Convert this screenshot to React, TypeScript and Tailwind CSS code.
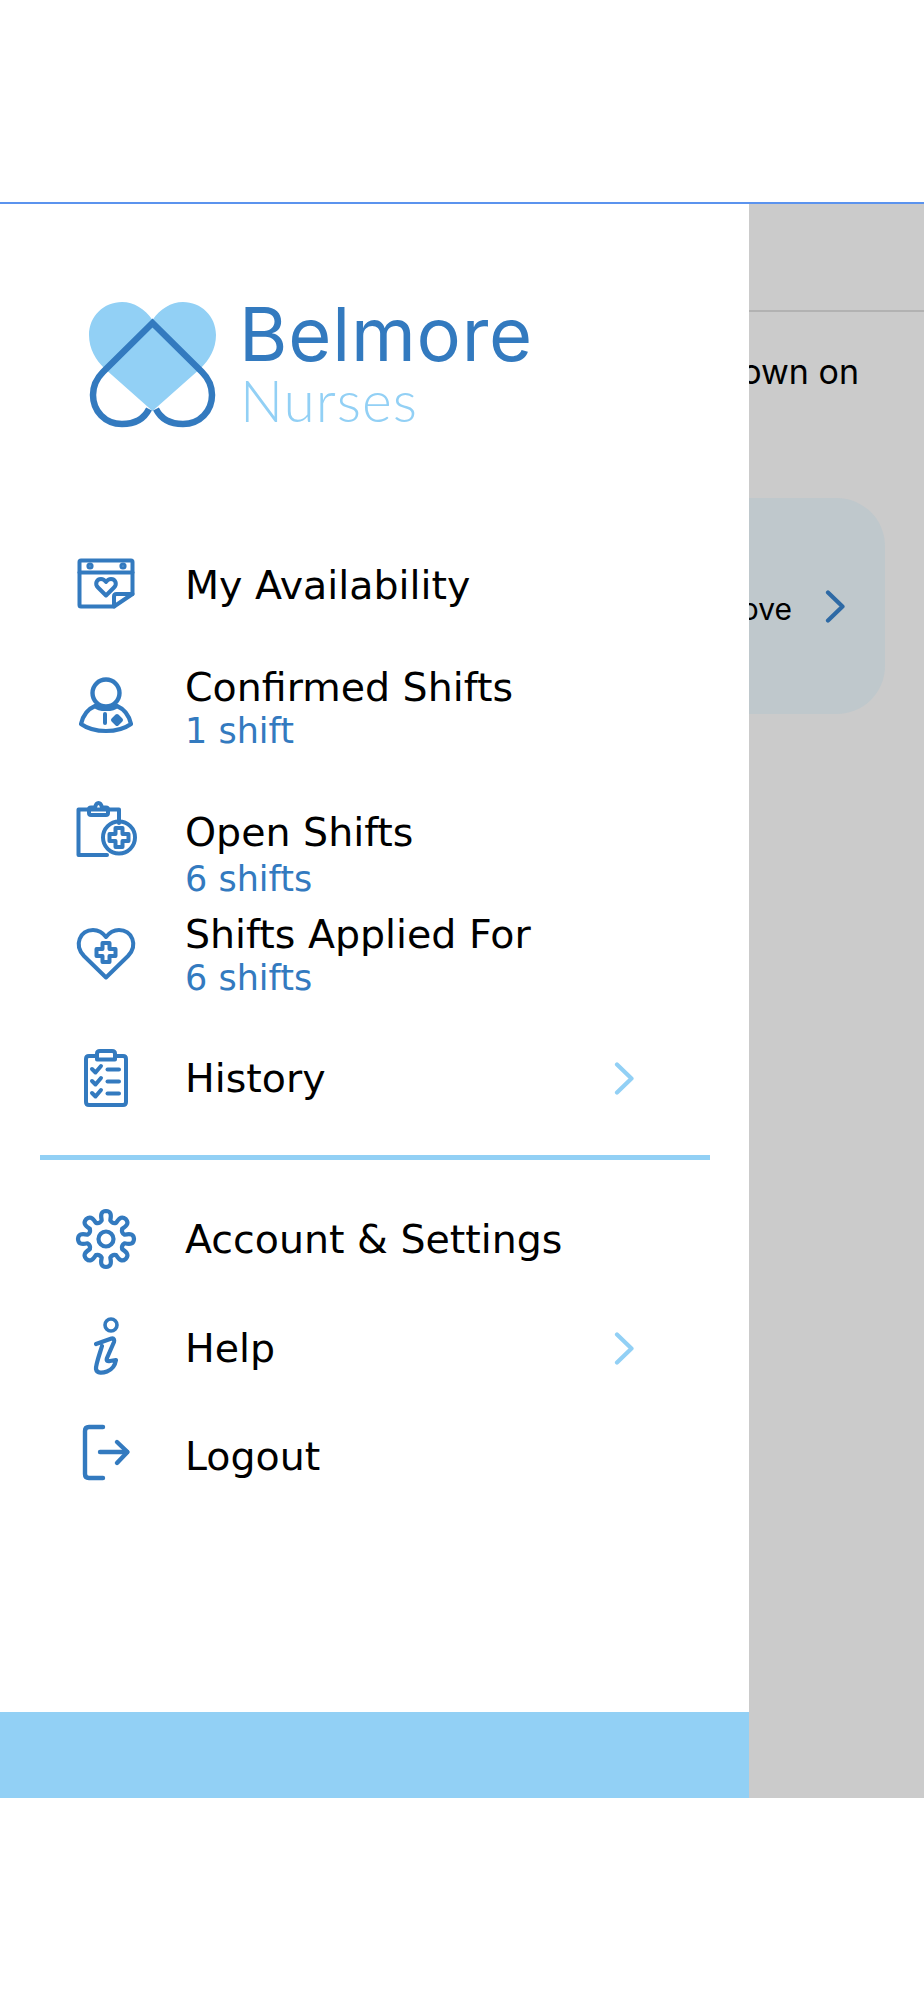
const BLUE = "#337abf";

function Logo() {
  return (
    <svg viewBox="85 298 135 135" className="w-[135px] h-[135px] shrink-0">
      <path
        d="M152.5 320 C145 309 134 302 122 302 C104 302 89 316 89 335 C89 349 96 360 104 368 L152.5 411 L201 368 C209 360 216 349 216 335 C216 316 201 302 183 302 C171 302 160 309 152.5 320 Z"
        fill="#92d0f5"
      />
      <path
        d="M149 409 C144 419 134 424 122 424 C105 424 93 411 93 395 C93 386 97 378 103 372 L152.5 323 L202 372 C208 378 212 386 212 395 C212 411 200 424 183 424 C171 424 161 419 156 409"
        fill="none"
        stroke={BLUE}
        strokeWidth="6.5"
      />
    </svg>
  );
}

function IconSvg({ children }: { children: React.ReactNode }) {
  return (
    <svg
      viewBox="0 0 72 64"
      className="w-[72px] h-[64px] shrink-0"
      fill="none"
      stroke={BLUE}
      strokeWidth="4"
      strokeLinecap="round"
      strokeLinejoin="round"
    >
      {children}
    </svg>
  );
}

// all icons are drawn around the centre of a 72x64 box
function CalendarIcon() {
  return (
    <IconSvg>
      <path d="M44 55.5 H11 Q9.5 55.5 9.5 54 V11 Q9.5 9.5 11 9.5 H61 Q62.5 9.5 62.5 11 V43 Z" />
      <path d="M9.5 21.5 H62.5" />
      <path d="M62.5 43 H46.5 Q44 43 44 45.5 V55.5" />
      <circle cx="20" cy="15" r="1.6" />
      <circle cx="53" cy="15" r="1.6" />
      <path d="M36 44.5 L28 36.5 C24.5 33 26.5 28 31 28 C33.5 28 35 29.5 36 31 C37 29.5 38.5 28 41 28 C45.5 28 47.5 33 44 36.5 Z" />
    </IconSvg>
  );
}

function PersonIcon() {
  return (
    <IconSvg>
      <circle cx="36" cy="19" r="13.5" strokeWidth="4.4" />
      <path d="M25 32 C18 35 13 41 11 50 C18 55 27 57 36 57 C45 57 54 55 61 50 C59 41 54 35 47 32 C43 36 29 36 25 32 Z" strokeWidth="4.2" />
      <path d="M35 40 V49" />
      <path d="M47 42 L51 46 L47 50 L43 46 Z" fill={BLUE} />
    </IconSvg>
  );
}

function ClipboardPlusIcon() {
  return (
    <IconSvg>
      <path d="M37 56 H8.5 V10.5 H49 V24" />
      <path d="M19 10.5 V14 Q19 16 21 16 H36 Q38 16 38 14 V10.5 Q38 8.5 36 8.5 H32 Q31 4 28.5 4 Q26 4 25 8.5 H21 Q19 8.5 19 10.5 Z" />
      <circle cx="49" cy="38.5" r="16" />
      <path d="M45.5 29 H52.5 V35 H58.5 V42 H52.5 V48 H45.5 V42 H39.5 V35 H45.5 Z" />
    </IconSvg>
  );
}

function HeartPlusIcon() {
  return (
    <IconSvg>
      <path d="M36 56.5 L14 35 C3.5 24 10 9 23 9 C29 9 33 12 36 16 C39 12 43 9 49 9 C62 9 68.5 24 58 35 Z" />
      <path d="M32.5 22 H39.5 V28 H45.5 V35 H39.5 V41 H32.5 V35 H26.5 V28 H32.5 Z" />
    </IconSvg>
  );
}

function ChecklistIcon() {
  return (
    <IconSvg>
      <path d="M27 11 H19 Q16 11 16 14 V57 Q16 60 19 60 H53 Q56 60 56 57 V14 Q56 11 53 11 H45" />
      <path d="M27 14.5 V8.5 Q27 6 30 6 H42 Q45 6 45 8.5 V14.5 Z" />
      <path d="M22 24 L25.5 27.5 L31 21" />
      <path d="M22 36 L25.5 39.5 L31 33" />
      <path d="M22 48 L25.5 51.5 L31 45" />
      <path d="M37.5 24.5 H49" />
      <path d="M37.5 36.5 H49" />
      <path d="M37.5 48.5 H49" />
    </IconSvg>
  );
}

function GearIcon() {
  const teeth = [0, 45, 90, 135, 180, 225, 270, 315];
  return (
    <IconSvg>
      <g strokeWidth="4.2">
        <circle cx="36" cy="32" r="7.5" />
        <path
          d={
            teeth
              .map((deg, i) => {
                const pt = (a: number, r: number) => {
                  const rad = ((deg + a - 90) * Math.PI) / 180;
                  return `${(36 + r * Math.cos(rad)).toFixed(1)} ${(32 + r * Math.sin(rad)).toFixed(1)}`;
                };
                return `${i === 0 ? "M" : "L"}${pt(-13, 19)} C${pt(-13, 26)} ${pt(-9, 28)} ${pt(0, 28)} C${pt(9, 28)} ${pt(13, 26)} ${pt(13, 19)} Q${pt(22.5, 16.5)} ${pt(32, 19)}`;
              })
              .join(" ") + " Z"
          }
        />
      </g>
    </IconSvg>
  );
}

function InfoIcon() {
  return (
    <IconSvg>
      <circle cx="41" cy="8" r="6" strokeWidth="3.6" />
      <path d="M26 27 L41.5 21.5 C44 21 44.5 23 44 25 L37 41 C36 44 37.5 44.5 40 44 L46 43 C45 49 41 53 37 54.5 C33 56 27 57 26 52 C25.5 48 30 36 32 29" strokeWidth="4.2" />
    </IconSvg>
  );
}

function LogoutIcon() {
  return (
    <IconSvg>
      <path d="M33 7 H19 Q15 7 15 11 V54 Q15 58 19 58 H33" strokeWidth="4.4" />
      <path d="M30 32 H57" strokeWidth="4.4" />
      <path d="M47 22 L57.5 32 L47 43" strokeWidth="4.4" />
    </IconSvg>
  );
}

function Chevron({ color }: { color: string }) {
  return (
    <svg viewBox="0 0 21 33" className="w-[21px] h-[33px]" fill="none" stroke={color} strokeWidth="4.2" strokeLinecap="round" strokeLinejoin="round">
      <path d="M3 2.5 L17.5 16.5 L3 30.5" />
    </svg>
  );
}

type Row = {
  label: string;
  sub?: string;
  icon: React.ReactNode;
  chevron?: boolean;
  rowClass: string;
  iconClass: string;
  subClass?: string;
};

const topRows: Row[] = [
  { label: "My Availability", icon: <CalendarIcon />, rowClass: "mt-[108px]", iconClass: "-mt-[5px]" },
  { label: "Confirmed Shifts", sub: "1 shift", icon: <PersonIcon />, rowClass: "mt-[36px]", iconClass: "-mt-[7px]" },
  { label: "Open Shifts", sub: "6 shifts", icon: <ClipboardPlusIcon />, rowClass: "mt-[58px]", iconClass: "-mt-[48px]", subClass: "mt-[3px]" },
  { label: "Shifts Applied For", sub: "6 shifts", icon: <HeartPlusIcon />, rowClass: "mt-[13px]", iconClass: "-mt-[6px]" },
  { label: "History", icon: <ChecklistIcon />, chevron: true, rowClass: "mt-[34px]", iconClass: "-mt-[3px]" },
];

const bottomRows: Row[] = [
  { label: "Account & Settings", icon: <GearIcon />, rowClass: "mt-[35px]", iconClass: "-mt-[1px]" },
  { label: "Help", icon: <InfoIcon />, chevron: true, rowClass: "mt-[21px]", iconClass: "mt-[2px]" },
  { label: "Logout", icon: <LogoutIcon />, rowClass: "mt-[20px]", iconClass: "-mt-[9px]" },
];

function MenuRow({ row }: { row: Row }) {
  return (
    <div className={`flex h-[88px] items-center pl-[70px] pr-[114px] ${row.rowClass}`}>
      <div className={row.iconClass}>{row.icon}</div>
      <div className="ml-[43px] flex-1">
        <div className="text-[39.5px] leading-[44px] text-black">{row.label}</div>
        {row.sub && <div className={`text-[35px] leading-[44px] text-[#337abf] ${row.subClass ?? ""}`}>{row.sub}</div>}
      </div>
      {row.chevron && <Chevron color="#92d0f5" />}
    </div>
  );
}

export default function App() {
  return (
    <div className="min-h-[2000px] bg-white font-['DejaVu_Sans',sans-serif]">
      <div className="h-[202px]" />
      <div className="relative h-[1596px] overflow-hidden border-t-2 border-[#5b93ee] bg-[#cbcbcb]">
        {/* page behind the drawer */}
        <div className="h-[108px] border-b-2 border-[#b2b2b2]" />
        <div className="pr-[65px] pt-[38px] text-right font-['Inter',sans-serif] text-[34px] leading-[44px] text-black">own on</div>
        <div className="mr-[39px] mt-[104px] flex h-[216px] items-center justify-end rounded-[48px] bg-[#bfc8cc] pr-[39px]">
          <span className="mr-[33px] mt-[6px] font-['Inter',sans-serif] text-[30px] text-black">ove</span>
          <Chevron color="#2e6aa5" />
        </div>

        {/* drawer */}
        <div className="absolute inset-y-0 left-0 flex w-[749px] flex-col bg-white">
          <div className="flex pl-[85px] pt-[94px]">
            <Logo />
            <div className="ml-[19px] flex flex-col">
              <div className="mt-[4px] font-['Inter',sans-serif] text-[74px] font-normal leading-[64px] tracking-[0.8px] text-[#337abf]">Belmore</div>
              <div className="ml-[1px] mt-[4px] font-['Lato',sans-serif] text-[57px] font-light leading-[60px] tracking-[1px] text-[#92d0f5]">Nurses</div>
            </div>
          </div>
          {topRows.map((row) => (
            <MenuRow key={row.label} row={row} />
          ))}
          <div className="ml-[40px] mt-[33px] h-[5px] w-[670px] bg-[#92d0f5]" />
          {bottomRows.map((row) => (
            <MenuRow key={row.label} row={row} />
          ))}
          <div className="mt-auto h-[86px] bg-[#92d0f5]" />
        </div>
      </div>
    </div>
  );
}
